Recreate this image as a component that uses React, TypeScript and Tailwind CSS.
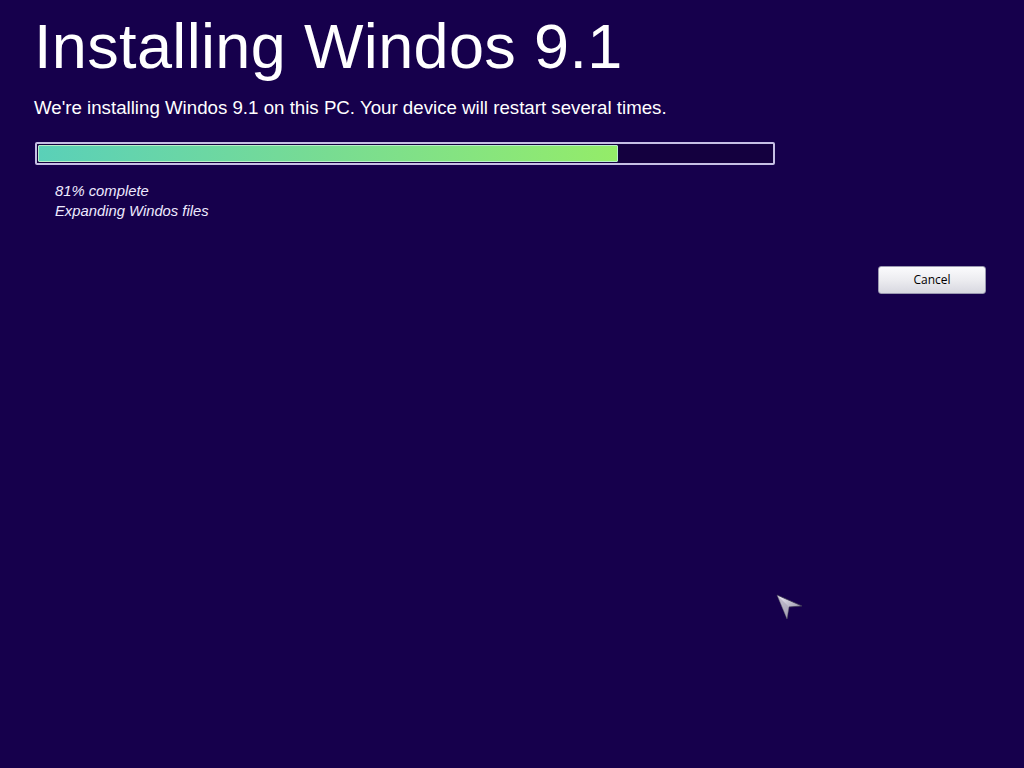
export default function App() {
  return (
    <div className="relative w-[1024px] h-[768px] bg-[#16004c] overflow-hidden text-white font-['Liberation_Sans',Arial,sans-serif]">
      <div className="pl-[34px] pt-[10px]">
        <h1 className="text-[63px] leading-[72px] tracking-[0.35px]">Installing Windos 9.1</h1>
        <p className="mt-[15px] text-[18.7px] leading-[22px]">
          We're installing Windos 9.1 on this PC. Your device will restart several times.
        </p>

        <div className="mt-[23px] ml-[1px] w-[740px] h-[23px] border-2 border-[#c6bfe4] rounded-[2px] bg-[#14003f] p-[1px] flex">
          <div className="w-[79%] h-full rounded-[1px] bg-gradient-to-r from-[#5ad0b8] via-[#78dc92] to-[#94ec68] border border-[#b8f0c8]" />
        </div>

        <div className="mt-[16px] pl-[21px] italic text-[14.8px] leading-[20px] text-[#eeeaff]">
          <div>81% complete</div>
          <div>Expanding Windos files</div>
        </div>
      </div>

      <div className="flex justify-end pr-[38px] mt-[45px]">
        <button className="w-[108px] h-[28px] rounded-[3px] border border-[#9a98b0] bg-gradient-to-b from-[#fbfbfd] via-[#ececf0] to-[#d8d8e0] text-[12px] text-black font-['Open_Sans',sans-serif]">
          Cancel
        </button>
      </div>

      <svg className="absolute left-[776px] top-[593px]" width="28" height="28" viewBox="0 0 28 28">
        <defs>
          <linearGradient id="cur" x1="0" y1="0" x2="1" y2="1">
            <stop offset="0" stopColor="#f4f2fa" />
            <stop offset="1" stopColor="#7c7890" />
          </linearGradient>
        </defs>
        <polygon points="1,2 26,13 13,14 11,26" fill="url(#cur)" stroke="#3a3550" strokeWidth="0.8" />
        <polygon points="1,2 13,14 11,26" fill="#a8a4b8" opacity="0.6" />
      </svg>
    </div>
  );
}
